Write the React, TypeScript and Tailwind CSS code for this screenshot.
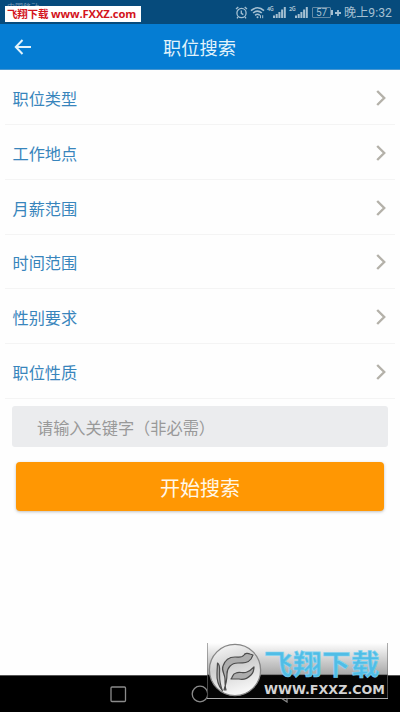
const filters = ['职位类型', '工作地点', '月薪范围', '时间范围', '性别要求', '职位性质']

function Signal({ label }: { label: string }) {
  return (
    <div className="flex h-[13px] w-[19px] items-start">
      <span className="w-[6px] text-[5.5px] font-bold leading-[6px] tracking-[-0.4px]">{label}</span>
      <svg width="13" height="13" viewBox="0 0 13 13" fill="currentColor">
        <path d="M0 9.5h2V12H0zM2.7 8h2v4h-2zM5.4 6h2v6h-2zM8.1 3.5h2V12h-2zM10.8 1h2v11h-2z" />
      </svg>
    </div>
  )
}

function StatusBar() {
  return (
    <div className="relative flex h-6 items-center bg-[#064b7c] text-[#a5c0d2]">
      <span className="absolute left-[7px] top-[2px] text-[8px] leading-[9px] text-[#7d9fb8]">中国移动</span>
      <div className="absolute left-[5px] top-[6px] flex h-4 w-[136px] items-center whitespace-nowrap bg-white pl-[2px] text-[10.5px] font-bold text-[#d3131b]">
        <span className="w-[44px] tracking-[-0.2px]">飞翔下载</span>
        <span className="font-['Open_Sans'] text-[11.2px] leading-4 tracking-[-0.1px]">www.FXXZ.com</span>
      </div>
      <div className="ml-[235px] flex items-center pt-px">
        <svg width="13" height="13" viewBox="0 0 13 13" fill="none" stroke="currentColor" strokeWidth="1.3">
          <circle cx="6.5" cy="7" r="4.6" />
          <path d="M6.3 4.5v2.8l2 1.3M1 3l2.3-2M12 3L9.7 1M3 11l-1 1.4M10 11l1 1.4" />
        </svg>
        <svg className="ml-[2px]" width="15" height="13" viewBox="0 0 15 13" fill="none" stroke="currentColor" strokeWidth="1.6">
          <path d="M1 4.6c4-3.6 9-3.6 13 0M3.1 7c2.7-2.4 6-2.4 8.7 0M5.1 9.3c1.5-1.3 3.2-1.3 4.7 0" />
          <circle cx="7.5" cy="11.2" r="1" fill="currentColor" stroke="none" />
          <path d="M10.5 9.2v3M12.7 9.2v3" strokeWidth="1" />
        </svg>
        <div className="ml-[2px]"><Signal label="4G" /></div>
        <div className="ml-[3px]"><Signal label="2G" /></div>
        <div className="ml-[4px] flex h-[11px] w-[19px] items-center justify-center rounded-[1px] border border-[#6389a5] font-[Roboto] text-[10px] leading-none">57</div>
        <span className="h-[5px] w-[2px] bg-[#a5c0d2]" />
        <svg className="ml-[2px]" width="6" height="6" viewBox="0 0 6 6" fill="none" stroke="currentColor" strokeWidth="1.8">
          <path d="M0 3h6M3 0v6" />
        </svg>
        <span className="ml-[3px] whitespace-nowrap font-[Roboto,'Noto_Sans_CJK_SC',sans-serif] text-[12.2px] leading-[22px]">晚上9:32</span>
      </div>
    </div>
  )
}

function Header() {
  return (
    <header className="flex h-[46px] items-center border-b border-[#4796d0] bg-[#057dd3] text-[#e2f3fb]">
      <svg className="ml-[14px]" width="18" height="18" viewBox="0 0 18 18" fill="none" stroke="currentColor" strokeWidth="2">
        <path d="M8.5 2L1.8 9l6.7 7M1.6 9H17" />
      </svg>
      <h1 className="flex-1 pr-[33px] pt-[2px] text-center text-[18.2px] leading-none">职位搜索</h1>
    </header>
  )
}

function FilterRow({ label }: { label: string }) {
  return (
    <div className="mx-[5px] flex h-[54.85px] items-center justify-between border-b border-[#f4f4f4] pl-[7.5px] pr-[9px] pt-[2px]">
      <span className="text-[16.2px] leading-none text-[#3885bc]">{label}</span>
      <svg width="10" height="16" viewBox="0 0 10 16" fill="none" stroke="#b4b1a9" strokeWidth="2.4">
        <path d="M1.2 1l7 7-7 7" />
      </svg>
    </div>
  )
}

function NavBar() {
  return (
    <div className="flex h-[37px] items-center border-t border-[#555] bg-black text-[#8b8b8b]">
      <svg className="ml-[110px]" width="17" height="17" viewBox="0 0 17 17" fill="none" stroke="currentColor" strokeWidth="1.3">
        <rect x="1" y="1" width="14.5" height="14.5" rx="1" />
      </svg>
      <svg className="ml-16" width="18" height="18" viewBox="0 0 18 18" fill="none" stroke="currentColor" strokeWidth="1.3">
        <circle cx="9" cy="9" r="7.8" />
      </svg>
      <svg className="ml-[64px]" width="18" height="18" viewBox="0 0 18 18" fill="none" stroke="currentColor" strokeWidth="1.2">
        <path d="M14 1v16L2 9z" />
      </svg>
    </div>
  )
}

function Watermark() {
  return (
    <div className="absolute left-[207px] top-[643px] flex h-[56px] w-[181px] overflow-hidden border border-t-0 border-[#77777799] bg-linear-to-b from-[#fefefe] from-0% via-[#a9a9a9] via-57% to-[#050505e8] to-58%">
      <svg className="shrink-0" width="54" height="55" viewBox="0 0 54 55">
        <defs>
          <linearGradient id="coin" x2="0.3" y2="1">
            <stop offset="0" stopColor="#fdfdfd" />
            <stop offset="0.5" stopColor="#cfcfcf" />
            <stop offset="0.7" stopColor="#dedede" />
            <stop offset="1" stopColor="#f5f5f5" />
          </linearGradient>
        </defs>
        <circle cx="27" cy="27" r="25.6" fill="url(#coin)" stroke="#868686" strokeWidth="1.3" />
        <g fill="#adadad" stroke="#4c4c4c" strokeWidth="1.2" strokeLinejoin="round">
          <path d="M18 47c-1-3-1-7-1-11 0-5-4-8-2-13 2-6 7-9 12-9s7 1 9-2c1-2 4-2 6-1l3 1-2 4c-3 4-7 4-13 4-7 0-11 5-11 11 0 5 0 7-3 16z" />
          <path d="M9.5 20c3 2 2 6 2 11 0 7 1 12 3 17-4-5-6-11-5.500-18z" />
          <path d="M23 36c2-2 1-5 5-6 4-2 7 1 11-1 3-1 5-3 7-5 0 4-1 6-3 8-4 4-8 5-12 4z" />
        </g>
      </svg>
      <div className="flex flex-col pl-[2px]">
        <span className="whitespace-nowrap pt-[4px] text-[28.6px] font-bold leading-[32px] tracking-[0.4px] text-[#50bde6] [-webkit-text-stroke:0.6px_#83d5f2]">飞翔下载</span>
        <svg className="mt-[3px]" width="123" height="13" viewBox="0 0 123 13">
          <text x="0" y="12" textLength="121" lengthAdjust="spacingAndGlyphs" fill="#d4d4d4" fontFamily="DejaVu Sans, sans-serif" fontSize="13" fontWeight="700">WWW.FXXZ.COM</text>
        </svg>
      </div>
    </div>
  )
}

export default function App() {
  return (
    <div className="relative flex h-[712px] w-[400px] flex-col overflow-hidden bg-[#fefefe] font-['Noto_Sans_CJK_SC',sans-serif]">
      <StatusBar />
      <Header />
      <main className="flex-1">
        {filters.map(f => <FilterRow key={f} label={f} />)}
        <div className="mx-3 mt-[7px] flex h-[41px] items-center rounded-[3px] bg-[#ebecee] pl-[25px] pt-px text-[16.2px] leading-none text-[#999]">
          请输入关键字（非必需）
        </div>
        <button className="mx-4 mt-[15px] flex h-[49px] w-[368px] items-center justify-center rounded-[4px] bg-[#ff9703] pt-[3px] text-[20px] leading-none text-[#fff8e9] shadow-[0_1px_3px_#8888]">
          开始搜索
        </button>
      </main>
      <NavBar />
      <Watermark />
    </div>
  )
}
